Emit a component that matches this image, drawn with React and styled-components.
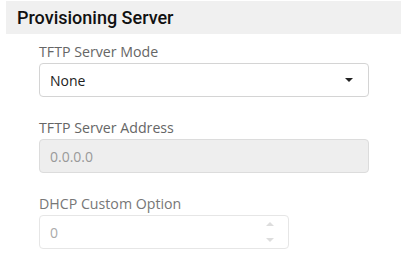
import styled, { createGlobalStyle } from 'styled-components'

const Global = createGlobalStyle`
    body {
        margin: 0;
        background: #fff;
        font-family: "Open Sans", "Noto Sans", sans-serif;
    }
`

const Page = styled.div`
    width: 401px;
    height: 259px;
    padding-top: 1px;
    padding-left: 6px;
    box-sizing: border-box;
    overflow: hidden;
`

const Header = styled.div`
    height: 33px;
    background-color: #f0f0f0;
    display: flex;
    align-items: center;
    padding-left: 11px;
`

const Title = styled.h2`
    margin: 0;
    font-family: Roboto, sans-serif;
    font-size: 18px;
    font-weight: 500;
    color: #111;
`

const Fields = styled.div`
    display: flex;
    flex-direction: column;
    padding: 8px 0 0 33px;
`

const Group = styled.div`
    display: flex;
    flex-direction: column;
    gap: 1px;
    margin-bottom: 21px;
`

const Label = styled.label`
    font-size: 14.2px;
    line-height: 20px;
    color: ${p => (p.$muted ? '#777' : '#666')};
`

const Box = styled.div`
    box-sizing: border-box;
    width: ${p => p.$width}px;
    height: 34px;
    border: 1px solid ${p => p.$border};
    border-radius: 4px;
    background: ${p => p.$bg};
    display: flex;
    align-items: center;
    padding: 0 10px;
    font-size: 14px;
    color: ${p => p.$color};
`

const Value = styled.span`
    flex: 1;
`

const Caret = styled.span`
    width: 0;
    height: 0;
    border-left: 4px solid transparent;
    border-right: 4px solid transparent;
    border-top: 4px solid #222;
    margin-right: 5px;
`

const Spinner = styled.div`
    display: flex;
    flex-direction: column;
    justify-content: space-between;
    height: 20px;
    margin-right: 4px;
`

const Arrow = styled.span`
    width: 0;
    height: 0;
    border-left: 4px solid transparent;
    border-right: 4px solid transparent;
    ${p => (p.$up ? 'border-bottom: 4px solid #ddd;' : 'border-top: 4px solid #ddd;')}
`

export default function App() {
    return (
        <Page>
            <Global />
            <Header>
                <Title>Provisioning Server</Title>
            </Header>
            <Fields>
                <Group>
                    <Label>TFTP Server Mode</Label>
                    <Box $width={330} $border="#d4d4d4" $bg="#fff" $color="#222">
                        <Value>None</Value>
                        <Caret />
                    </Box>
                </Group>
                <Group>
                    <Label>TFTP Server Address</Label>
                    <Box $width={330} $border="#dcdcdc" $bg="#eeeeee" $color="#999">
                        <Value>0.0.0.0</Value>
                    </Box>
                </Group>
                <Group>
                    <Label $muted>DHCP Custom Option</Label>
                    <Box $width={250} $border="#e6e6e6" $bg="#fff" $color="#aaa">
                        <Value>0</Value>
                        <Spinner>
                            <Arrow $up />
                            <Arrow />
                        </Spinner>
                    </Box>
                </Group>
            </Fields>
        </Page>
    )
}
